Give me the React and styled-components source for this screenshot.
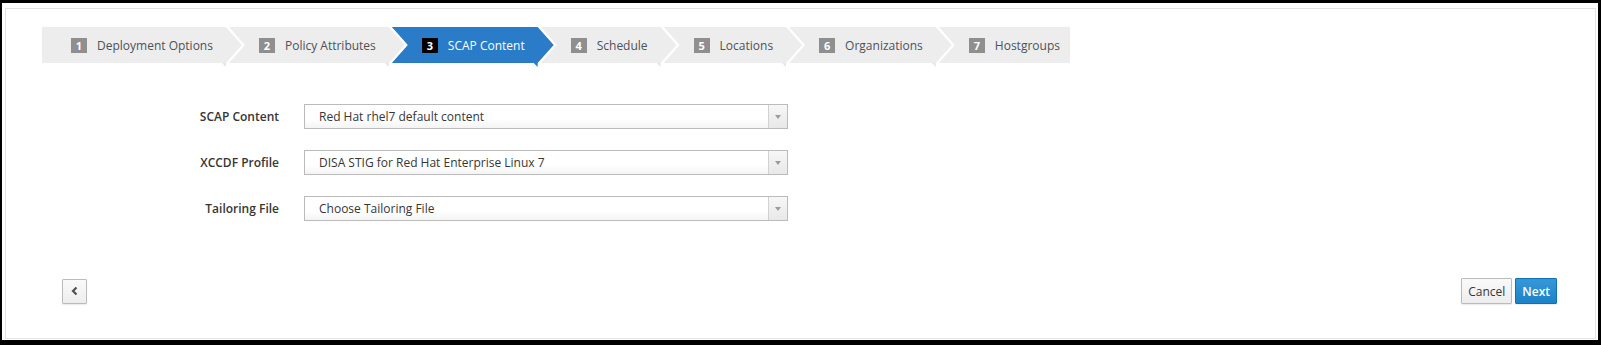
import React from 'react'
import styled, { createGlobalStyle, css } from 'styled-components'

const Global = createGlobalStyle`
  html, body {
    margin: 0;
    padding: 0;
    background: #000;
  }
  body {
    font-family: "Open Sans", "Liberation Sans", sans-serif;
    font-size: 12px;
    color: #363636;
  }
`

const Frame = styled.div`
  width: 1601px;
  height: 345px;
  box-sizing: border-box;
  padding: 3px 3px 5px 2px;
  background: #000;
`

const Sheet = styled.div`
  height: 100%;
  box-sizing: border-box;
  padding: 5px 2px 1px 3px;
  background: #fff;
`

const Panel = styled.div`
  height: 100%;
  box-sizing: border-box;
  border: 1px solid #e3e3e3;
  padding: 18px 38px 0 36px;
  display: flex;
  flex-direction: column;
`

const Steps = styled.ol`
  display: flex;
  list-style: none;
  margin: 0;
  padding: 0;
`

const DEPTH = 16

const StepWrap = styled.li`
  position: relative;
  display: flex;
  & + & {
    margin-left: -13px;
  }
`

const Step = styled.div`
  display: flex;
  align-items: center;
  height: 36px;
  margin-bottom: 4px;
  padding: 0 29px 0 ${p => (p.$first ? 29 : 30)}px;
  background: ${p => (p.$active ? '#2a7bc8' : '#ededed')};
  color: ${p => (p.$active ? '#fff' : '#4d5258')};
  white-space: nowrap;
  clip-path: polygon(
    0 0,
    calc(100% - ${DEPTH}px) 0,
    100% 50%,
    calc(100% - ${DEPTH}px) 100%,
    0 100%,
    ${p => (p.$first ? '0 50%' : `${DEPTH}px 50%`)}
  );

  ${p =>
    p.$last &&
    css`
      padding-right: 10px;
      clip-path: polygon(0 0, 100% 0, 100% 100%, 0 100%, ${DEPTH}px 50%);
    `}
`

const Tail = styled.span`
  position: absolute;
  right: ${DEPTH}px;
  top: 36px;
  width: 4px;
  height: 4px;
  background: ${p => (p.$active ? '#2a7bc8' : '#e6e6e6')};
  clip-path: polygon(0 0, 100% 0, 100% 100%);
`

const Num = styled.span`
  display: inline-flex;
  align-items: center;
  justify-content: center;
  width: 16px;
  height: 15px;
  margin-right: 10px;
  background: ${p => (p.$active ? '#000' : '#8f8f8f')};
  color: #fff;
  font-size: 11px;
  font-weight: 700;
`

const Form = styled.div`
  margin-top: 37px;
  display: flex;
  flex-direction: column;
  gap: 21px;
`

const Row = styled.div`
  display: flex;
  align-items: center;
`

const Label = styled.label`
  width: 237px;
  text-align: right;
  margin-right: 25px;
  font-weight: 600;
  color: #363636;
`

const Select = styled.div`
  width: 484px;
  height: 25px;
  box-sizing: border-box;
  display: flex;
  border: 1px solid #bbb;
  background: linear-gradient(#fff 0%, #fff 60%, #f4f4f4 100%);
`

const Value = styled.span`
  flex: 1;
  display: flex;
  align-items: center;
  padding-left: 14px;
  color: #363636;
`

const Caret = styled.span`
  width: 18px;
  display: flex;
  align-items: center;
  justify-content: center;
  border-left: 1px solid #d1d1d1;
  background: linear-gradient(#f7f7f7, #e8e8e8);

  &::after {
    content: '';
    border-left: 3px solid transparent;
    border-right: 3px solid transparent;
    border-top: 4px solid #9c9c9c;
  }
`

const Footer = styled.div`
  margin-top: 57px;
  padding-left: 20px;
  display: flex;
  align-items: center;
`

const Button = styled.button`
  height: 26px;
  box-sizing: border-box;
  padding: 0 6px;
  font-family: inherit;
  font-size: 12px;
  border: 1px solid #bbb;
  border-radius: 1px;
  background: linear-gradient(#fafafa, #ededed);
  color: #363636;
  box-shadow: 0 1px 1px rgba(0, 0, 0, 0.08);
  display: inline-flex;
  align-items: center;
  justify-content: center;

  ${p =>
    p.$primary &&
    css`
      background: linear-gradient(#3598d8, #1b82c9);
      border-color: #1070b0;
      color: #fff;
      font-weight: 600;
      margin-left: 3px;
      padding: 0 6px;
    `}
`

const BackButton = styled(Button)`
  width: 25px;
  height: 25px;
  padding: 0;
`

const Spacer = styled.div`
  flex: 1;
`

const steps = [
  'Deployment Options',
  'Policy Attributes',
  'SCAP Content',
  'Schedule',
  'Locations',
  'Organizations',
  'Hostgroups',
]

const fields = [
  ['SCAP Content', 'Red Hat rhel7 default content'],
  ['XCCDF Profile', 'DISA STIG for Red Hat Enterprise Linux 7'],
  ['Tailoring File', 'Choose Tailoring File'],
]

export default function App() {
  return (
    <>
      <Global />
      <Frame>
        <Sheet>
          <Panel>
            <Steps>
              {steps.map((name, i) => {
                const active = i === 2
                const last = i === steps.length - 1
                return (
                  <StepWrap key={name}>
                    <Step $active={active} $first={i === 0} $last={last}>
                      <Num $active={active}>{i + 1}</Num>
                      {name}
                    </Step>
                    {!last && <Tail $active={active} />}
                  </StepWrap>
                )
              })}
            </Steps>
            <Form>
              {fields.map(([label, value]) => (
                <Row key={label}>
                  <Label>{label}</Label>
                  <Select>
                    <Value>{value}</Value>
                    <Caret />
                  </Select>
                </Row>
              ))}
            </Form>
            <Footer>
              <BackButton aria-label="Back">
                <svg width="10" height="10" viewBox="0 0 10 10">
                  <path d="M6.5 1.5 L3 5 L6.5 8.5" fill="none" stroke="#4d5258" strokeWidth="2.2" />
                </svg>
              </BackButton>
              <Spacer />
              <Button>Cancel</Button>
              <Button $primary>Next</Button>
            </Footer>
          </Panel>
        </Sheet>
      </Frame>
    </>
  )
}
